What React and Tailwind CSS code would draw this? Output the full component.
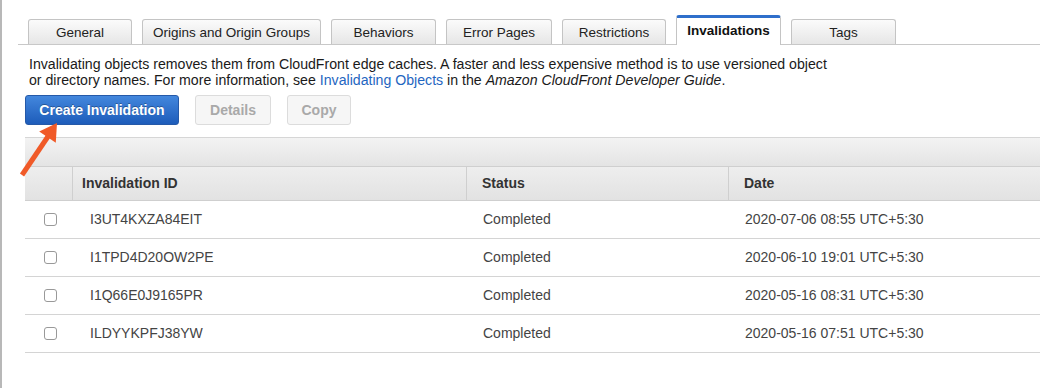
import React from 'react';

const TABS = [
    { label: 'General', w: 104 },
    { label: 'Origins and Origin Groups', w: 179 },
    { label: 'Behaviors', w: 105 },
    { label: 'Error Pages', w: 106 },
    { label: 'Restrictions', w: 104 },
    { label: 'Invalidations', w: 105, active: true },
    { label: 'Tags', w: 105 },
];

const ROWS = [
    { id: 'I3UT4KXZA84EIT', status: 'Completed', date: '2020-07-06 08:55 UTC+5:30' },
    { id: 'I1TPD4D20OW2PE', status: 'Completed', date: '2020-06-10 19:01 UTC+5:30' },
    { id: 'I1Q66E0J9165PR', status: 'Completed', date: '2020-05-16 08:31 UTC+5:30' },
    { id: 'ILDYYKPFJ38YW', status: 'Completed', date: '2020-05-16 07:51 UTC+5:30' },
];

const Tab = ({ label, w, active }) => (
    active ? (
        <div
            style={{ width: w }}
            className="h-[30px] -mb-px bg-white border border-b-0 border-[#c4c4c4] border-t-[3px] border-t-[#2f6fcb] rounded-t-[3px] flex items-center justify-center text-[13.5px] font-bold text-[#111]"
        >
            {label}
        </div>
    ) : (
        <div
            style={{ width: w }}
            className="h-[25px] bg-gradient-to-b from-[#fbfbfb] to-[#e6e6e6] border border-b-0 border-[#c4c4c4] rounded-t-[3px] flex items-center justify-center pt-[2px] text-[13.5px] text-[#222]"
        >
            {label}
        </div>
    )
);

const Checkbox = () => (
    <div className="w-[13px] h-[13px] rounded-[3px] border border-[#999] bg-white" />
);

export default function App() {
    return (
        <div className="relative w-[1040px] h-[388px] bg-white border-l-2 border-[#b8b8b8] overflow-hidden font-['Liberation_Sans',Arial,sans-serif]">
            {/* tab strip */}
            <div className="pt-[15px] pl-[16px]">
                <div className="flex items-end gap-[10px] pl-[10px] border-b border-[#c8c8c8]">
                    {TABS.map(t => <Tab key={t.label} {...t} />)}
                </div>
            </div>

            {/* description */}
            <p className="mt-[11px] pl-[27px] text-[14.15px] leading-[16px] text-[#1a1a1a]">
                Invalidating objects removes them from CloudFront edge caches. A faster and less expensive method is to use versioned object
                <br />
                or directory names. For more information, see <span className="text-[#1f66c1]">Invalidating Objects</span> in the <i>Amazon CloudFront Developer Guide</i>.
            </p>

            {/* buttons */}
            <div className="flex gap-[16px] pl-[23px] mt-[7px]">
                <button className="w-[154px] h-[30px] rounded-[3px] border border-[#2559a8] bg-gradient-to-b from-[#4387dd] to-[#1d5cba] text-white font-bold text-[14px] [text-shadow:0_-1px_0_rgba(0,0,0,0.3)]">
                    Create Invalidation
                </button>
                <button className="w-[76px] h-[30px] rounded-[3px] border border-[#dcdcdc] bg-[#f6f6f6] text-[#a9a9a9] font-bold text-[14px]">
                    Details
                </button>
                <button className="w-[64px] h-[30px] rounded-[3px] border border-[#dcdcdc] bg-[#f6f6f6] text-[#a9a9a9] font-bold text-[14px]">
                    Copy
                </button>
            </div>

            {/* table */}
            <div className="ml-[23px] mt-[12px]">
                <div className="h-[29px] bg-gradient-to-b from-[#f3f3f3] to-[#e4e4e4] border-t border-[#d6d6d6]" />
                <div className="flex h-[35px] bg-gradient-to-b from-[#eeeeee] to-[#e2e2e2] border-t border-b border-[#cfcfcf] text-[14px] font-bold text-[#333]">
                    <div className="w-[48px] border-r border-[#cfcfcf]" />
                    <div className="w-[394px] flex items-center pl-[9px] border-r border-[#cfcfcf]">Invalidation ID</div>
                    <div className="w-[262px] flex items-center pl-[15px] border-r border-[#cfcfcf]">Status</div>
                    <div className="flex-1 flex items-center pl-[15px]">Date</div>
                </div>
                {ROWS.map(r => (
                    <div key={r.id} className="flex h-[38px] items-center border-b border-[#d4d4d4] text-[14px] text-[#444]">
                        <div className="w-[48px] flex justify-center pl-[3px]"><Checkbox /></div>
                        <div className="w-[394px] pl-[17px]">{r.id}</div>
                        <div className="w-[262px] pl-[16px]">{r.status}</div>
                        <div className="flex-1 pl-[16px]">{r.date}</div>
                    </div>
                ))}
            </div>

            {/* annotation arrow */}
            <svg className="absolute left-[14px] top-[118px]" width="50" height="62" viewBox="0 0 50 62">
                <line x1="6" y1="57" x2="32" y2="18.5" stroke="#f05a28" strokeWidth="5" />
                <polygon points="41,5 23.2,13.5 39.8,24.7" fill="#f05a28" />
            </svg>
        </div>
    );
}
